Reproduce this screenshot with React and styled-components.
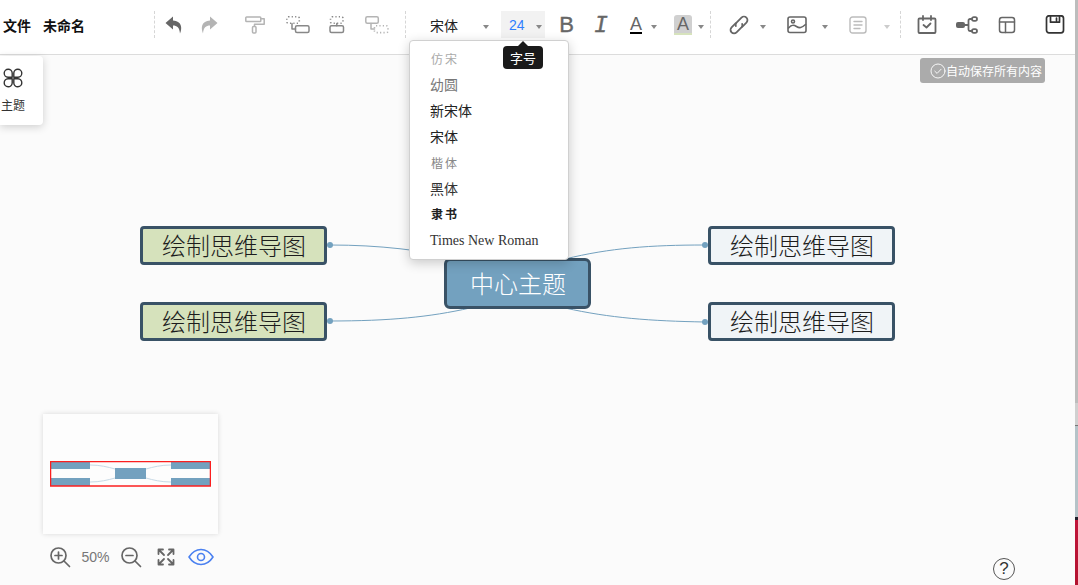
import React from 'react';
import styled, { createGlobalStyle } from 'styled-components';

const Global = createGlobalStyle`
  html, body { margin: 0; padding: 0; width: 100%; height: 100%; overflow: hidden; background: #fbfbfb; }
  #root { height: 100%; }
  * { box-sizing: border-box; }
`;

const CJK = `"Liberation Serif", "Noto Sans CJK SC", serif`;
const SANS = `"Liberation Sans", "Noto Sans CJK SC", sans-serif`;

const Page = styled.div`
  position: relative;
  width: 1078px;
  height: 585px;
  overflow: hidden;
  font-family: ${SANS};
  background: #fbfbfb;
  display: flex;
  flex-direction: column;
`;
const Toolbar = styled.header`
  flex: none;
  height: 55px;
  background: #fff;
  border-bottom: 1px solid #dcdcdc;
  display: flex;
  align-items: center;
  padding: 0 0 5px 3px;
`;
const MenuText = styled.span`
  font-size: 14px;
  font-weight: 700;
  color: #111;
  width: ${p => p.$w}px;
  flex: none;
`;
const Divider = styled.div`
  flex: none;
  width: 1px;
  height: 27px;
  border-left: 1px dashed #d6d6d6;
`;
const Slot = styled.div`
  flex: none;
  width: ${p => p.$w}px;
  display: flex;
  align-items: center;
  justify-content: center;
  color: ${p => p.$c || '#666'};
  svg { flex: none; }
`;
const Caret = styled.i`
  flex: none;
  width: 0;
  height: 0;
  border-left: 3.5px solid transparent;
  border-right: 3.5px solid transparent;
  border-top: 4px solid ${p => p.$light ? '#ccc' : '#888'};
  margin-top: 4px;
`;
const FontSelect = styled.div`
  flex: none;
  width: 83px;
  padding-left: 24px;
  padding-right: 0;
  display: flex;
  align-items: center;
  justify-content: space-between;
  font-size: 14px;
  color: #222;
`;
const SizeBox = styled.div`
  flex: none;
  width: 44px;
  height: 27px;
  background: #f2f2f2;
  display: flex;
  align-items: center;
  justify-content: space-between;
  padding: 0 3px 0 8px;
  font-size: 14px;
  color: #2f80ff;
`;
const Workspace = styled.main`
  position: relative;
  flex: 1;
`;
const ThemeCard = styled.div`
  position: absolute;
  left: 0;
  top: 1px;
  width: 43px;
  height: 69px;
  background: #fff;
  border-radius: 0 4px 4px 0;
  box-shadow: 0 2px 8px rgba(0,0,0,.18);
  display: flex;
  flex-direction: column;
  align-items: flex-start;
  padding: 12px 0 0 1px;
  font-size: 12px;
  color: #333;
  gap: 8px;
  svg { margin-left: 2px; flex: none; }
`;
const Saved = styled.div`
  position: absolute;
  left: 920px;
  top: 3px;
  width: 125px;
  height: 25px;
  background: #ababab;
  border-radius: 3px;
  color: #fff;
  font-size: 12px;
  display: flex;
  align-items: center;
  padding-left: 10px;
  white-space: nowrap;
`;
const Links = styled.svg`
  position: absolute;
  left: 0;
  top: 0;
`;
const Node = styled.div`
  position: absolute;
  left: ${p => p.$x}px;
  top: ${p => p.$y}px;
  width: ${p => p.$w}px;
  height: ${p => p.$h}px;
  background: ${p => p.$bg};
  color: ${p => p.$fg};
  border: 3px solid #395266;
  border-radius: ${p => p.$r}px;
  font-family: ${CJK};
  font-size: 24px;
  font-weight: 300;
  display: flex;
  align-items: center;
  justify-content: center;
  padding: 0 0 3px 1px;
  white-space: nowrap;
`;
const Dot = styled.i`
  position: absolute;
  left: ${p => p.$x - 3}px;
  top: ${p => p.$y - 3}px;
  width: 6px;
  height: 6px;
  border-radius: 50%;
  background: #73a1bf;
`;
const Dropdown = styled.ul`
  position: absolute;
  left: 409px;
  top: 40px;
  width: 160px;
  height: 220px;
  margin: 0;
  padding: 6px 0 0;
  list-style: none;
  background: #fff;
  border: 1px solid #d0d0d0;
  border-radius: 4px;
  box-shadow: 0 3px 12px rgba(0,0,0,.2);
  z-index: 5;
`;
const FontItem = styled.li`
  height: ${p => p.$h || 26}px;
  line-height: ${p => p.$h || 26}px;
  padding-left: ${p => p.$pl || 20}px;
  font-size: ${p => p.$size || 14}px;
  letter-spacing: ${p => p.$ls || 0}px;
  color: ${p => p.$c || '#222'};
  font-family: ${CJK};
  font-weight: ${p => p.$weight || 400};
  white-space: nowrap;
`;
const Tip = styled.div`
  position: absolute;
  left: 503px;
  top: 46px;
  width: 40px;
  height: 23px;
  background: #1a1a1a;
  color: #fff;
  border-radius: 4px;
  font-size: 13px;
  display: flex;
  align-items: center;
  justify-content: center;
  z-index: 6;
  &::before {
    content: '';
    position: absolute;
    left: 15px;
    top: -5px;
    border-left: 5px solid transparent;
    border-right: 5px solid transparent;
    border-bottom: 5px solid #1a1a1a;
  }
`;
const MiniMap = styled.div`
  position: absolute;
  left: 43px;
  top: 359px;
  width: 175px;
  height: 120px;
  background: #fdfdfd;
  box-shadow: 0 0 5px rgba(0,0,0,.14);
  display: flex;
  align-items: center;
  justify-content: center;
`;
const MiniFrame = styled.svg`
  display: block;
`;
const ZoomBar = styled.div`
  position: absolute;
  left: 49px;
  top: 489px;
  height: 26px;
  display: flex;
  align-items: center;
`;
const ZoomLabel = styled.span`
  width: ${p => p.$w}px;
  text-align: center;
  color: #777;
  font-size: 14px;
  flex: none;
`;
const Help = styled.div`
  position: absolute;
  left: 993px;
  top: 503px;
  width: 22px;
  height: 22px;
  border: 1px solid #555;
  border-radius: 50%;
  display: flex;
  align-items: center;
  justify-content: center;
  font-size: 17px;
  color: #333;
`;
const EdgeStrip = styled.div`
  position: absolute;
  right: 0;
  top: 0;
  width: 3px;
  height: 585px;
  background: linear-gradient(to bottom, #bdbdbd 0, #bdbdbd 403px, #d0d0d0 403px, #d0d0d0 425px, #777 425px, #777 426px, #b5c3c8 426px, #b5c3c8 517px, #20202a 517px, #20202a 520px, #c0143a 520px, #b3122f 585px);
  z-index: 9;
`;

const Ico = ({ w = 24, h = 24, vb, children, sw = 1.6 }) => (
  <svg width={w} height={h} viewBox={vb || `0 0 ${w} ${h}`} fill="none" stroke="currentColor" strokeWidth={sw} strokeLinecap="round" strokeLinejoin="round">{children}</svg>
);

const Dashed = ({ x, y, width, height }) => (
  <rect x={x} y={y} width={width} height={height} rx="1.500" strokeDasharray="1.200 2.200" strokeLinecap="butt" strokeWidth="1.600" />
);

const Undo = () => <svg width="18" height="18" viewBox="0 0 18 18" fill="currentColor"><path d="M8 .5.500 7l7.500 6.500V9.500c4 0 6.500 2 7 8 2.500-6 1.500-12.500-7-13z"/></svg>;
const Redo = () => <svg width="18" height="18" viewBox="0 0 18 18" fill="currentColor"><path d="M10 .5 17.500 7 10 13.500V9.500c-4 0-6.500 2-7 8C.5 11.500 1.500 5 10 4.500z"/></svg>;
const Roller = () => <Ico w={20} h={18} sw={1.500}><rect x=".8" y="1" width="15" height="4.500" rx=".8"/><path d="M16 2.800h3.200v5.400H9.500v2"/><rect x="7.500" y="10.500" width="3.500" height="6.500" rx="1"/></Ico>;
const SubA = () => <Ico w={24} h={18} sw={1.500}><Dashed x={.8} y={.8} width={12.500} height={6.400} /><path d="M6 7.500v5.500h3.500"/><rect x="9.500" y="9.800" width="13.500" height="6.800" rx="1.500"/></Ico>;
const SubB = () => <Ico w={16} h={18} sw={1.500}><Dashed x={1.500} y={.8} width={12.500} height={6.400} /><path d="M7.800 7.500v2.300"/><rect x="1" y="9.800" width="13.500" height="6.800" rx="1.500"/></Ico>;
const SubC = () => <Ico w={24} h={18} sw={1.500}><rect x=".8" y=".8" width="12.500" height="6.400" rx="1.500"/><path d="M6 7.500v5.500h3.500"/><Dashed x={9.500} y={9.800} width={13.500} height={6.800} /></Ico>;
const Link = () => <Ico w={24} h={24} sw={1.800}><g transform="rotate(-45 12 12)"><path d="M11 8.500H5a3.500 3.500 0 0 0 0 7h7a3.500 3.500 0 0 0 3-2"/><path d="M13 15.500h6a3.500 3.500 0 0 0 0-7h-7a3.500 3.500 0 0 0-3 2"/></g></Ico>;
const Image = () => <Ico w={20} h={18} sw={1.600}><rect x="1" y="1" width="18" height="15.500" rx="2"/><circle cx="6" cy="5.500" r="1.500"/><path d="M1.500 12c3-3.500 5-3.500 8-1.500s5 1.500 9-2"/></Ico>;
const Note = () => <Ico w={18} h={18} sw={1.400}><rect x="1" y="1" width="16" height="16" rx="2.500"/><path d="M5 5.500h8M5 9h8M5 12.500h6"/></Ico>;
const Calendar = () => <Ico w={20} h={20} sw={1.800}><rect x="1.500" y="3.500" width="17" height="14.500" rx="1"/><path d="M6 1v4M14 1v4M6.500 10l3 2.500 4-4"/></Ico>;
const Mind = () => <svg width="24" height="18" viewBox="0 0 24 18" fill="none" stroke="currentColor" strokeWidth="1.800"><rect x="1" y="6" width="9" height="6" rx="2" fill="currentColor" strokeWidth="0"/><path d="M10 9h3.500M17 3h-2a1.500 1.500 0 0 0-1.500 1.500v9a1.500 1.500 0 0 0 1.500 1.500h2"/><rect x="17" y="1.200" width="5" height="3.600" rx="1.800"/><rect x="17" y="13.200" width="5" height="3.600" rx="1.800"/></svg>;
const Layout = () => <Ico w={18} h={18} sw={1.500}><rect x="1.500" y="1.500" width="15" height="15" rx="2.500"/><path d="M1.500 6h15M7.500 6v10.500"/></Ico>;
const Save = () => <Ico w={20} h={20} sw={1.700}><rect x="1.500" y=".8" width="17" height="17" rx="2.500"/><path d="M5.500 1.200v6h9v-6M11.500 3v2.500"/></Ico>;
const Flower = () => <Ico w={20} h={20} sw={1.400}><path d="M9.200 9.200H5a4 4 0 1 1 4.200-4.200zM10.800 9.200H15a4 4 0 1 0-4.200-4.200zM9.200 10.800H5a4 4 0 1 0 4.200 4.200zM10.800 10.800H15a4 4 0 1 1-4.200 4.200z"/></Ico>;
const ZoomIn = ({ minus }) => <Ico w={22} h={22} sw={1.700}><circle cx="9.500" cy="9.500" r="7.500"/><path d="M15 15l5.500 5.500M6 9.500h7"/>{!minus && <path d="M9.500 6v7"/>}</Ico>;
const Expand = () => <Ico w={18} h={18} sw={1.800}><path d="M1.500 6V1.500H6M12 1.500h4.500V6M1.500 12v4.500H6M12 16.500h4.500V12M2 2l5 5M16 2l-5 5M2 16l5-5M16 16l-5-5"/></Ico>;
const Eye = () => <Ico w={26} h={18} sw={1.600}><path d="M1 9c6.500-10 17.500-10 24 0-6.500 10-17.500 10-24 0z"/><circle cx="13" cy="9" r="3.500"/></Ico>;
const SavedCheck = () => <Ico w={16} h={16} sw={0.900}><circle cx="8" cy="8" r="7"/><path d="M4.800 8.200l2.300 2.200 4-4.200"/></Ico>;

const FontA = ({ bar }) => (
  <svg width="18" height="22" viewBox="0 0 18 22"><text x="9" y="15.500" textAnchor="middle" fontFamily={SANS} fontSize="18" fill="#666">A</text><rect x="3" y="18" width="12" height="2" fill={bar}/></svg>
);
const HighlightBox = styled.div`
  width: 18px;
  height: 20px;
  background: #d0d0d0;
  border-radius: 3px 3px 0 0;
  border-bottom: 2px solid #d7e3bd;
  color: #666;
  font-size: 18px;
  text-align: center;
  line-height: 18px;
`;
const BigLetter = styled.span`
  font-family: ${p => p.$mono ? '"Liberation Mono", monospace' : SANS};
  font-size: ${p => p.$mono ? 23 : 22}px;
  font-style: ${p => p.$mono ? 'italic' : 'normal'};
  padding-top: ${p => p.$mono ? 2 : 0}px;
  -webkit-text-stroke: 0.4px #666;
  color: #666;
`;

const nodes = [
  { x: 140, y: 171, bg: '#d6e2bc' },
  { x: 140, y: 247, bg: '#d6e2bc' },
  { x: 708, y: 171, bg: '#f0f4f7' },
  { x: 708, y: 247, bg: '#f0f4f7' },
];

export default function App() {
  return (
    <Page>
      <Global />
      <Toolbar>
        <MenuText $w={40}>文件</MenuText>
        <MenuText $w={111}>未命名</MenuText>
        <Divider />
        <Slot $w={37}><Undo /></Slot>
        <Slot $w={34} $c="#b4b4b4"><Redo /></Slot>
        <Slot $w={58} $c="#b4b4b4"><Roller /></Slot>
        <Slot $w={27} $c="#888"><SubA /></Slot>
        <Slot $w={51} $c="#888"><SubB /></Slot>
        <Slot $w={29} $c="#b4b4b4"><SubC /></Slot>
        <Slot $w={14} />
        <Divider />
        <FontSelect>宋体<Caret /></FontSelect>
        <Slot $w={12} />
        <SizeBox>24<Caret /></SizeBox>
        <Slot $w={43}><BigLetter>B</BigLetter></Slot>
        <Slot $w={26}><BigLetter $mono>I</BigLetter></Slot>
        <Slot $w={8} />
        <Slot $w={28}><FontA bar="#000" /></Slot>
        <Slot $w={8}><Caret /></Slot>
        <Slot $w={15} />
        <Slot $w={20}><HighlightBox>A</HighlightBox></Slot>
        <Slot $w={16}><Caret /></Slot>
        <Slot $w={1} />
        <Divider />
        <Slot $w={8} />
        <Slot $w={40}><Link /></Slot>
        <Slot $w={8}><Caret /></Slot>
        <Slot $w={10} />
        <Slot $w={40}><Image /></Slot>
        <Slot $w={16}><Caret /></Slot>
        <Slot $w={50} $c="#bcbcbc"><Note /></Slot>
        <Slot $w={8}><Caret $light /></Slot>
        <Slot $w={9} />
        <Divider />
        <Slot $w={52}><Calendar /></Slot>
        <Slot $w={28}><Mind /></Slot>
        <Slot $w={52}><Layout /></Slot>
        <Slot $w={44} $c="#333"><Save /></Slot>
      </Toolbar>
      <Workspace>
        <ThemeCard><Flower />主题</ThemeCard>
        <Saved><SavedCheck />自动保存所有内容</Saved>
        <Links width="1078" height="530" fill="none" stroke="#73a1bf" strokeWidth="1">
          <path d="M330 190 C 380 190, 420 195, 470 205" />
          <path d="M330 266 C 390 266, 430 262, 470 253" />
          <path d="M705 190 C 650 190, 610 193, 565 204" />
          <path d="M705 267 C 650 266, 610 263, 565 253" />
        </Links>
        {nodes.map((n, i) => (
          <Node key={i} $x={n.x} $y={n.y} $w={187} $h={39} $r={4} $bg={n.bg} $fg="#1c1c1c">绘制思维导图</Node>
        ))}
        <Dot $x={330} $y={190} />
        <Dot $x={330} $y={266} />
        <Dot $x={705} $y={190} />
        <Dot $x={705} $y={267} />
        <Node $x={444} $y={203} $w={147} $h={51} $r={6} $bg="#73a1bf" $fg="#fff">中心主题</Node>
        <MiniMap>
          <MiniFrame width="161" height="26" viewBox="0 0 161 26">
            <rect x="1" y="0" width="39" height="8" fill="#73a1bf"/>
            <rect x="1" y="17" width="39" height="8" fill="#73a1bf"/>
            <rect x="121" y="0" width="39" height="8" fill="#73a1bf"/>
            <rect x="121" y="17" width="39" height="8" fill="#73a1bf"/>
            <rect x="65" y="7" width="31" height="11" fill="#73a1bf"/>
            <path d="M40 4C50 4 58 6 65 8M40 21C50 21 58 19 65 17M121 4C111 4 103 6 96 8M121 21C111 21 103 19 96 17" stroke="#c7d9e5" strokeWidth="1" fill="none"/>
            <rect x="0.500" y="0.500" width="160" height="24.500" fill="none" stroke="#fb1f1f" strokeWidth="1.500"/>
          </MiniFrame>
        </MiniMap>
        <ZoomBar>
          <Slot $w={22}><ZoomIn /></Slot>
          <ZoomLabel $w={49}>50%</ZoomLabel>
          <Slot $w={22}><ZoomIn minus /></Slot>
          <Slot $w={48}><Expand /></Slot>
          <Slot $w={22} $c="#4a80f0"><Eye /></Slot>
        </ZoomBar>
        <Help>?</Help>
      </Workspace>
      <Dropdown>
        <FontItem $c="#aaa" $size={12} $ls={2} $pl={21}>仿宋</FontItem>
        <FontItem $c="#777">幼圆</FontItem>
        <FontItem>新宋体</FontItem>
        <FontItem>宋体</FontItem>
        <FontItem $c="#888" $size={12} $ls={2} $pl={21}>楷体</FontItem>
        <FontItem $c="#333">黑体</FontItem>
        <FontItem $size={12} $ls={2} $pl={21} $weight={700} $h={25}>隶书</FontItem>
        <FontItem $c="#333">Times New Roman</FontItem>
      </Dropdown>
      <Tip>字号</Tip>
      <EdgeStrip />
    </Page>
  );
}
